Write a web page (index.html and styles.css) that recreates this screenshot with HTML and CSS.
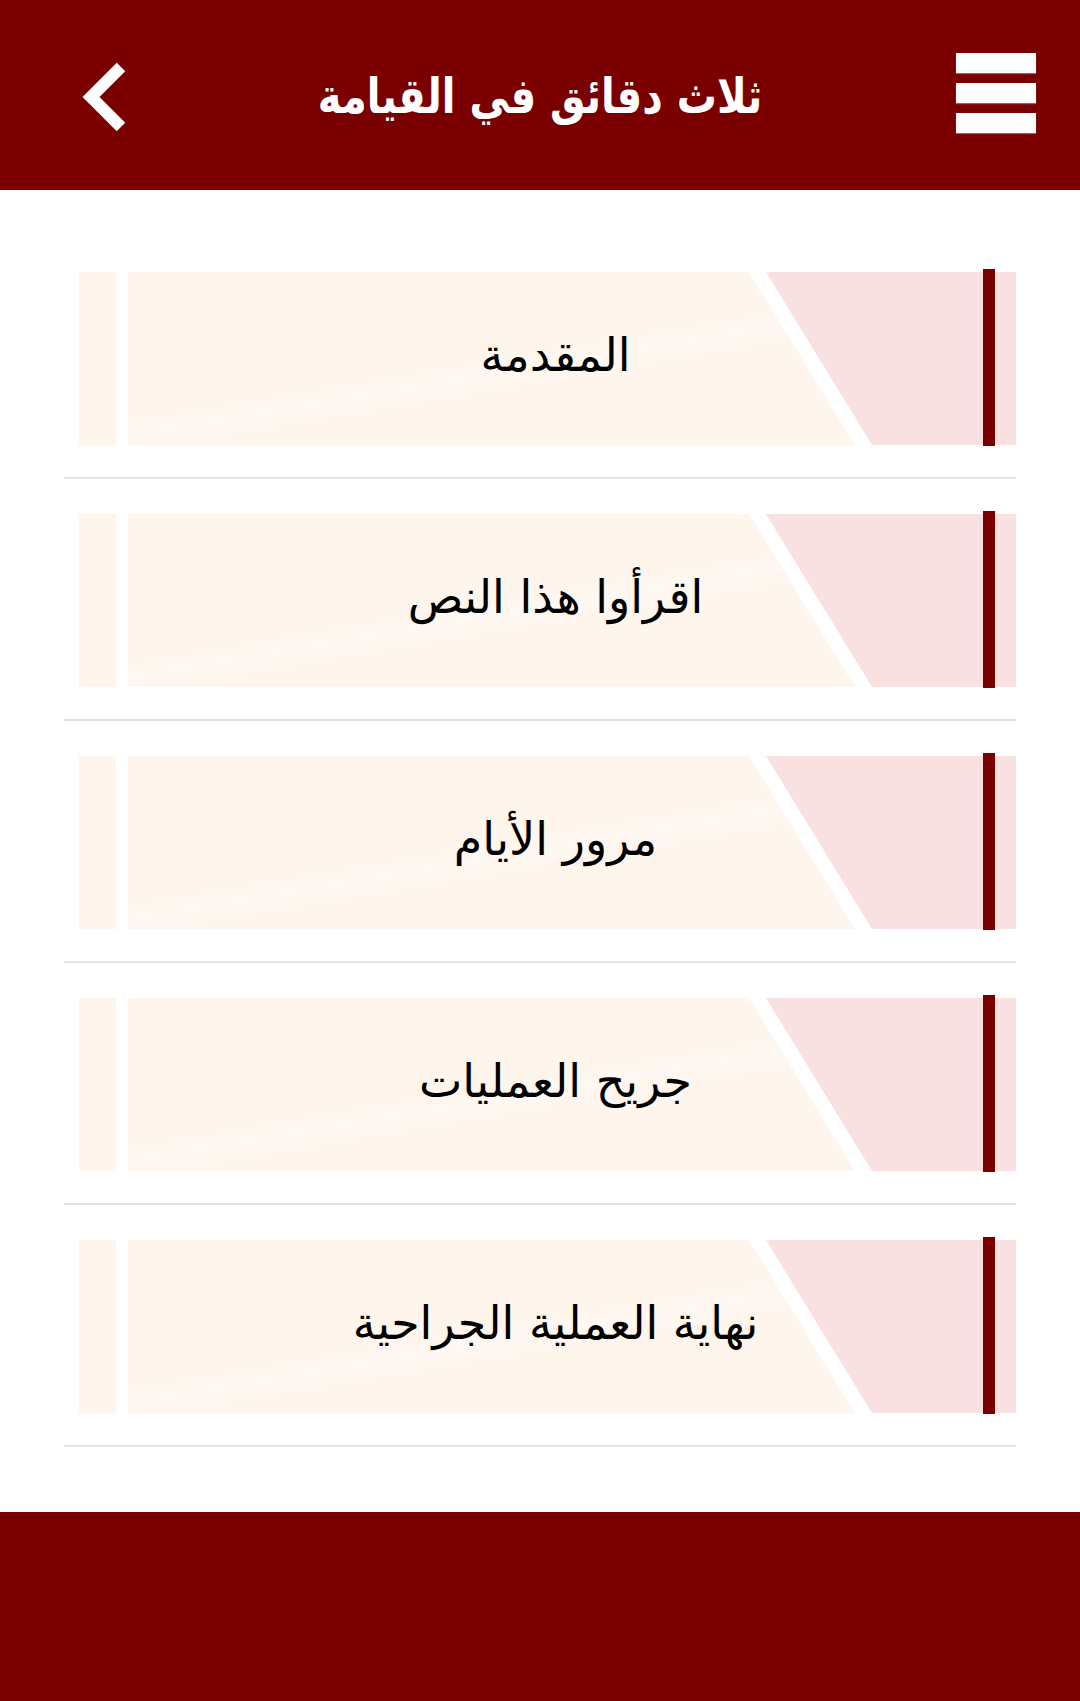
FILE: index.html
```html
<!DOCTYPE html>
<html lang="ar">
<head>
<meta charset="utf-8">
<title>ثلاث دقائق في القيامة</title>
<link rel="stylesheet" href="styles.css">
</head>
<body>
<header class="topbar">
  <button class="icon-btn back" aria-label="رجوع">
    <svg width="50" height="80" viewBox="0 0 50 80">
      <polyline points="40,10 10,40 40,70" fill="none" stroke="#fff" stroke-width="12" stroke-linejoin="miter"/>
    </svg>
  </button>
  <h1 class="title">ثلاث دقائق في القيامة</h1>
  <button class="icon-btn menu" aria-label="القائمة">
    <span class="bar-line"></span>
    <span class="bar-line"></span>
    <span class="bar-line"></span>
  </button>
</header>

<main class="content">
  <ul class="chapters">
    <li class="chapter">
      <div class="card">
        <div class="strip"></div>
        <div class="panel">
          <span class="label">المقدمة</span>
          <span class="marker"></span>
        </div>
      </div>
    </li>
    <li class="chapter">
      <div class="card">
        <div class="strip"></div>
        <div class="panel">
          <span class="label">اقرأوا هذا النص</span>
          <span class="marker"></span>
        </div>
      </div>
    </li>
    <li class="chapter">
      <div class="card">
        <div class="strip"></div>
        <div class="panel">
          <span class="label">مرور الأيام</span>
          <span class="marker"></span>
        </div>
      </div>
    </li>
    <li class="chapter">
      <div class="card">
        <div class="strip"></div>
        <div class="panel">
          <span class="label">جريح العمليات</span>
          <span class="marker"></span>
        </div>
      </div>
    </li>
    <li class="chapter">
      <div class="card">
        <div class="strip"></div>
        <div class="panel">
          <span class="label">نهاية العملية الجراحية</span>
          <span class="marker"></span>
        </div>
      </div>
    </li>
  </ul>
</main>

<footer class="bottombar"></footer>
</body>
</html>
```

FILE: styles.css
```css
html, body {
  margin: 0;
  padding: 0;
}

body {
  width: 1080px;
  height: 1701px;
  display: flex;
  flex-direction: column;
  background: #ffffff;
  font-family: "DejaVu Sans", sans-serif;
  overflow: hidden;
}

.topbar {
  height: 190px;
  flex: 0 0 190px;
  background: #7a0000;
  display: grid;
  grid-template-columns: 1fr auto 1fr;
  align-items: center;
  padding: 0 44px;
  box-sizing: border-box;
  direction: ltr;
}

.icon-btn {
  background: none;
  border: 0;
  padding: 0;
  margin: 0;
  cursor: pointer;
}

.back {
  width: 50px;
  height: 80px;
  display: block;
  justify-self: start;
  margin-left: 37px;
  margin-top: 3px;
}

.back svg {
  display: block;
}

.title {
  margin: 0;
  color: #ffffff;
  font-family: "DejaVu Sans", sans-serif;
  font-weight: bold;
  font-size: 40px;
  line-height: 1;
  direction: rtl;
  transform: scaleY(1.22);
  margin-top: 2px;
}

.menu {
  width: 80px;
  height: 80px;
  justify-self: end;
  display: flex;
  flex-direction: column;
  justify-content: space-between;
  margin-top: -4px;
}

.bar-line {
  display: block;
  width: 80px;
  height: 20px;
  background: #ffffff;
  box-shadow: 0 1px 1px rgba(255, 255, 255, 0.35);
}

.content {
  flex: 1;
  padding: 82px 64px 0;
}

.chapters {
  list-style: none;
  margin: 0;
  padding: 0;
}

.chapter {
  padding-bottom: 32px;
  border-bottom: 2px solid #e2e2e2;
  margin-bottom: 35px;
}

.chapter:last-child {
  margin-bottom: 0;
}

.card {
  height: 173px;
  margin-left: 15px;
  display: flex;
  gap: 12px;
  direction: ltr;
}

.strip {
  width: 37px;
  background: #fef5ec;
}

.panel {
  flex: 1;
  position: relative;
  background: #f9e1e2;
  display: flex;
  align-items: stretch;
}

.panel::before {
  content: "";
  position: absolute;
  inset: 0;
  background: #ffffff;
  clip-path: polygon(0 0, 638px 0, 744px 100%, 0 100%);
}

.panel::after {
  content: "";
  position: absolute;
  inset: 0;
  background:
    linear-gradient(170.4deg,
      rgba(255,255,255,0) 45%,
      rgba(255,255,255,0.35) 50%,
      rgba(255,255,255,0.18) 54%,
      rgba(255,255,255,0) 59%),
    #fef5ec;
  clip-path: polygon(0 0, 621px 0, 727px 100%, 0 100%);
}

.label {
  position: relative;
  z-index: 1;
  flex: 1;
  display: flex;
  align-items: center;
  justify-content: center;
  direction: rtl;
  font-size: 46px;
  color: #000000;
  padding-bottom: 8px;
}

.marker {
  position: relative;
  z-index: 1;
  width: 12px;
  background: #7a0000;
  margin: -3px 21px -1px 0;
}

.bottombar {
  flex: 0 0 189px;
  height: 189px;
  background: #7a0000;
}
```
